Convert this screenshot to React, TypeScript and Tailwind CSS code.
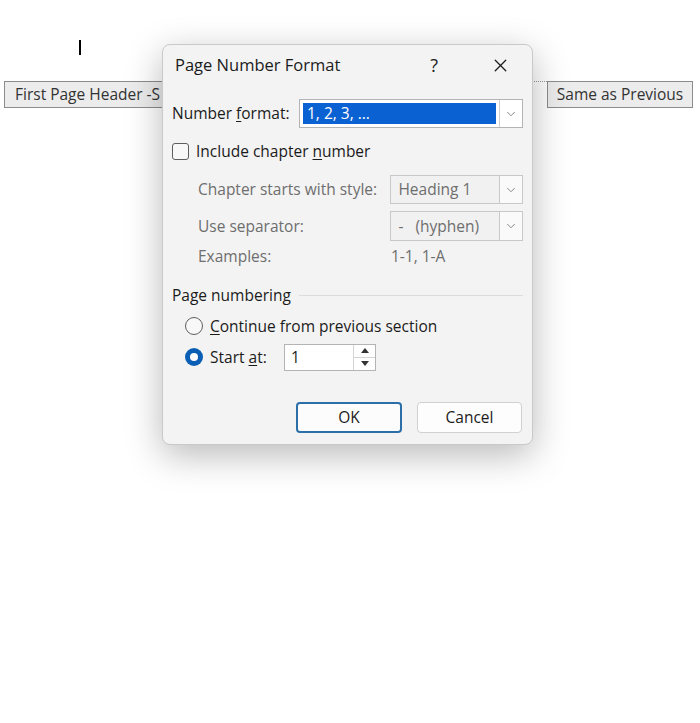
import { ChevronDown, X } from 'lucide-react';

const font = { fontFamily: '"Open Sans", "Noto Sans", sans-serif' };

function Combo({ value, disabled, selected, className }: { value: string; disabled?: boolean; selected?: boolean; className: string }) {
    return (
        <div className={`flex border ${disabled ? 'border-[#c8c8c8] bg-[#f1f1f1]' : 'border-[#b4b4b4] bg-white'} ${className}`}>
            <div className="flex-1 flex items-center p-[3px]">
                <span
                    className={`w-full h-full flex items-center pl-[4px] whitespace-pre ${
                        selected ? 'bg-[#0a62d2] text-white' : disabled ? 'text-[#6e6e6e]' : 'text-[#1a1a1a]'
                    }`}
                >
                    {value}
                </span>
            </div>
            <div className={`w-[23px] flex items-center justify-center border-l ${disabled ? 'border-[#c8c8c8] bg-[#fafafa]' : 'border-[#cfcfcf] bg-white'}`}>
                <ChevronDown className="w-[14px] h-[14px] text-[#7a7a7a]" strokeWidth={1.5} />
            </div>
        </div>
    );
}

export default function App() {
    return (
        <div className="relative w-[700px] h-[723px] bg-white overflow-hidden text-[15.5px]" style={font}>
            {/* Document header area */}
            <div className="pt-[40px] pl-[79px]">
                <div className="w-[1.5px] h-[15px] bg-black" />
            </div>
            <div className="mt-[26px] flex items-start">
                <div className="ml-[4px] w-[159px] h-[27px] border border-[#8c8c8c] bg-[#ececec] flex items-center pl-[10px] text-[#333] whitespace-nowrap overflow-hidden">
                    First Page Header -S
                </div>
                <div className="flex-1 border-t border-dotted border-[#9a9a9a] mt-0" />
                <div className="mr-[7px] w-[146px] h-[27px] border border-[#8c8c8c] bg-[#ececec] flex items-center justify-center text-[#333] whitespace-nowrap">
                    Same as Previous
                </div>
            </div>

            {/* Dialog */}
            <div className="absolute left-[162px] top-[44px] w-[371px] h-[401px] rounded-[8px] border border-[#c9c9c9] bg-[#f3f3f3] shadow-[0_10px_36px_rgba(0,0,0,0.28)] text-[#1b1b1b]">
                {/* Title bar */}
                <div className="h-[41px] flex items-center pl-[12px]">
                    <span className="text-[16.5px]">Page Number Format</span>
                    <span className="ml-auto text-[18px] mr-[52px]">?</span>
                    <X className="w-[21px] h-[21px] mr-[21px]" strokeWidth={1.5} />
                </div>

                <div className="pl-[9px] pr-[9px]">
                    {/* Number format */}
                    <div className="mt-[13px] flex items-center">
                        <span className="w-[127px]">
                            Number <span className="underline underline-offset-2">f</span>ormat:
                        </span>
                        <Combo value="1, 2, 3, …" selected className="w-[224px] h-[29px]" />
                    </div>

                    {/* Include chapter number */}
                    <div className="mt-[12px] flex items-center">
                        <div className="w-[17px] h-[17px] rounded-[3px] border border-[#5e5e5e] bg-[#f8f8f8]" />
                        <span className="ml-[7px]">
                            Include chapter <span className="underline underline-offset-2">n</span>umber
                        </span>
                    </div>

                    <div className="pl-[26px] text-[#6e6e6e]">
                        <div className="mt-[12px] flex items-center">
                            <span className="w-[193px]">Chapter starts with style:</span>
                            <Combo value="Heading 1" disabled className="w-[133px] h-[29px]" />
                        </div>
                        <div className="mt-[7px] flex items-center">
                            <span className="w-[193px]">Use separator:</span>
                            <Combo value="-   (hyphen)" disabled className="w-[133px] h-[30px]" />
                        </div>
                        <div className="mt-[1px] flex items-center h-[28px]">
                            <span className="w-[193px]">Examples:</span>
                            <span>1-1, 1-A</span>
                        </div>
                    </div>

                    {/* Page numbering */}
                    <div className="mt-[14px] flex items-center">
                        <span>Page numbering</span>
                        <div className="flex-1 ml-[8px] h-px bg-[#dcdcdc]" />
                    </div>
                    <div className="pl-[13px]">
                        <div className="mt-[7px] flex items-center">
                            <div className="w-[18px] h-[18px] rounded-full border border-[#5e5e5e] bg-[#f8f8f8]" />
                            <span className="ml-[7px]">
                                <span className="underline underline-offset-2">C</span>ontinue from previous section
                            </span>
                        </div>
                        <div className="mt-[6px] flex items-center">
                            <div className="w-[18px] h-[18px] rounded-full bg-[#0a5fb4] flex items-center justify-center">
                                <div className="w-[8px] h-[8px] rounded-full bg-white" />
                            </div>
                            <span className="ml-[7px] w-[74px]">
                                Start <span className="underline underline-offset-2">a</span>t:
                            </span>
                            <div className="w-[92px] h-[27px] border border-[#b4b4b4] bg-white flex">
                                <span className="flex-1 flex items-center pl-[6px]">1</span>
                                <div className="w-[22px] border-l border-[#d4d4d4] flex flex-col">
                                    <div className="flex-1 flex items-center justify-center border-b border-[#d4d4d4]">
                                        <svg width="8" height="5" viewBox="0 0 8 5"><path d="M0 5 L4 0 L8 5 Z" fill="#333" /></svg>
                                    </div>
                                    <div className="flex-1 flex items-center justify-center">
                                        <svg width="8" height="5" viewBox="0 0 8 5"><path d="M0 0 L4 5 L8 0 Z" fill="#333" /></svg>
                                    </div>
                                </div>
                            </div>
                        </div>
                    </div>

                    {/* Buttons */}
                    <div className="mt-[31px] flex justify-end gap-[15px] pr-[1px]">
                        <button className="w-[106px] h-[31px] rounded-[4px] border-2 border-[#2b6ea8] bg-[#fcfcfc]">OK</button>
                        <button className="w-[105px] h-[31px] rounded-[4px] border border-[#d0d0d0] bg-[#fdfdfd]">Cancel</button>
                    </div>
                </div>
            </div>
        </div>
    );
}
